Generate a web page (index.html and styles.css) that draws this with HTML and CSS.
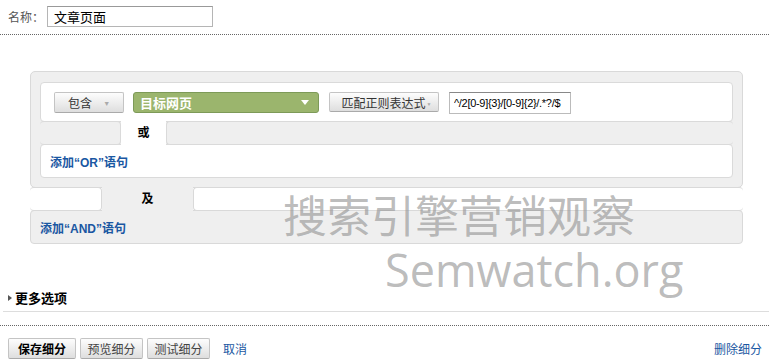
FILE: index.html
```html
<!DOCTYPE html>
<html lang="zh-CN">
<head>
    <meta charset="UTF-8">
    <title>细分</title>
    <link rel="stylesheet" href="styles.css">
</head>
<body>
    <div class="name-row">
        <label>名称：</label>
        <input type="text" class="name-input" value="文章页面">
    </div>
    <div class="dotted"></div>

    <div class="or-group">
        <div class="clause">
            <button class="btn-gray btn-include">包含 <span class="arrow-gray">&#9660;</span></button>
            <div class="select-green">
                <span>目标网页</span>
                <span class="arrow-white"></span>
            </div>
            <button class="btn-gray btn-match">匹配正则表达式<span class="arrow-gray small">&#9660;</span></button>
            <input type="text" class="regex-input" value="^/2[0-9]{3}/[0-9]{2}/.*?/$">
        </div>
        <div class="joint">
            <div class="joint-side left"></div>
            <div class="joint-tab">或</div>
            <div class="joint-side right"></div>
        </div>
        <div class="clause add-row">
            <a href="#" class="add-link">添加“OR”语句</a>
        </div>
    </div>

    <div class="joint and">
        <div class="joint-side left"></div>
        <div class="joint-tab">及</div>
        <div class="joint-side right"></div>
    </div>
    <div class="and-box">
        <a href="#" class="add-link">添加“AND”语句</a>
    </div>

    <div class="more">
        <span class="tri"></span>更多选项
    </div>
    <div class="dotted bottom"></div>

    <div class="actions">
        <button class="btn-gray btn-action strong">保存细分</button>
        <button class="btn-gray btn-action">预览细分</button>
        <button class="btn-gray btn-action">测试细分</button>
        <a href="#" class="link cancel">取消</a>
        <a href="#" class="link delete">删除细分</a>
    </div>

    <div class="watermark">
        <div class="wm-cn">搜索引擎营销观察</div>
        <div class="wm-en">Semwatch.org</div>
    </div>
</body>
</html>
```

FILE: styles.css
```css
body {
    margin: 0;
    font-family: "Liberation Sans", "Noto Sans CJK SC", sans-serif;
    font-size: 12px;
    color: #000;
    background: #fff;
    position: relative;
    height: 363px;
    overflow: hidden;
}
.name-row {
    display: flex;
    align-items: center;
    padding: 6px 0 0 8px;
    height: 21px;
}
.name-row label {
    color: #555;
    width: 39px;
}
.name-input {
    width: 166px;
    height: 21px;
    box-sizing: border-box;
    border: 1px solid #b5b5b5;
    border-top-color: #999;
    padding: 0 6px;
    font-family: inherit;
    font-size: 13px;
    color: #000;
}
.dotted {
    border-top: 1px dotted #666;
    margin-top: 7px;
}
.or-group {
    margin: 36px 26px 0 30px;
    background: #efefef;
    border: 1px solid #d9d9d9;
    border-radius: 5px;
    padding: 10px 9px 9px 9px;
}
.clause {
    display: flex;
    align-items: center;
    background: #fff;
    border: 1px solid #dadada;
    border-radius: 4px;
    height: 38px;
    padding-left: 13px;
}
.btn-gray {
    font-family: inherit;
    font-size: 12px;
    color: #333;
    background: linear-gradient(#fdfdfd, #dedede);
    border: 1px solid #c4c4c4;
    border-bottom-color: #aaa;
    border-radius: 2px;
    height: 21px;
    padding: 0;
    cursor: pointer;
}
.btn-include {
    width: 70px;
    text-align: left;
    padding-left: 13px;
}
.arrow-gray {
    color: #aaa;
    font-size: 7px;
    margin-left: 8px;
    vertical-align: 2px;
}
.arrow-gray.small {
    margin-left: 1px;
    font-size: 5px;
}
.select-green {
    display: flex;
    align-items: center;
    justify-content: space-between;
    box-sizing: border-box;
    width: 186px;
    height: 21px;
    margin-left: 9px;
    padding: 0 9px 0 6px;
    background: #9bb56d;
    border: 1px solid #7d9a58;
    border-radius: 3px;
    color: #fff;
    font-weight: bold;
    font-size: 13px;
}
.arrow-white {
    width: 0;
    height: 0;
    border-left: 4px solid transparent;
    border-right: 4px solid transparent;
    border-top: 5px solid #fff;
}
.btn-match {
    width: 110px;
    height: 20px;
    margin-left: 10px;
    padding-left: 5px;
}
.regex-input {
    width: 122px;
    height: 22px;
    box-sizing: border-box;
    margin: 1px 0 0 10px;
    border: 1px solid #bbb;
    border-top-color: #888;
    padding: 0 2px 0 4px;
    font-family: "Liberation Sans", sans-serif;
    font-size: 11px;
    letter-spacing: -0.3px;
    color: #000;
}
.joint {
    display: flex;
    height: 24px;
    margin: -1px 0;
}
.joint-side {
    background: #efefef;
    border: 1px solid #dadada;
    border-radius: 4px;
}
.joint-side.left {
    width: 80px;
    border-left: none;
}
.joint-side.right {
    flex: 1;
    border-right: none;
}
.joint-tab {
    width: 45px;
    background: #fff;
    font-weight: bold;
    text-align: center;
    line-height: 24px;
}
.add-row {
    height: 32px;
    padding-left: 9px;
}
.add-link {
    color: #1a57a2;
    font-weight: bold;
    text-decoration: none;
}
.joint.and {
    margin: -1px 26px -1px 30px;
}
.joint.and .joint-side {
    background: #fff;
    border-color: #d9d9d9;
}
.joint.and .joint-side.left {
    width: 71px;
}
.joint.and .joint-tab {
    width: 91px;
    background: #efefef;
}
.and-box {
    display: flex;
    align-items: center;
    height: 32px;
    margin: 0 26px 0 30px;
    padding-left: 9px;
    background: #efefef;
    border: 1px solid #d9d9d9;
    border-radius: 4px;
}
.more {
    display: flex;
    align-items: center;
    margin: 44px 0 0 3px;
    padding: 0 0 4px 5px;
    border-bottom: 1px solid #ddd;
    font-size: 13px;
    font-weight: bold;
}
.tri {
    width: 0;
    height: 0;
    border-top: 3px solid transparent;
    border-bottom: 3px solid transparent;
    border-left: 4px solid #555;
    margin-right: 3px;
}
.dotted.bottom {
    margin-top: 13px;
}
.actions {
    display: flex;
    align-items: center;
    padding: 12px 7px 0 8px;
    gap: 4px;
}
.btn-action {
    width: 63px;
    height: 21px;
    color: #444;
}
.btn-action.strong {
    width: 68px;
    font-weight: bold;
    color: #000;
}
.link {
    color: #1a57a2;
    text-decoration: none;
}
.cancel {
    margin-left: 9px;
}
.delete {
    margin-left: auto;
}
.watermark {
    position: absolute;
    left: 283px;
    top: 186px;
    color: rgba(150, 150, 150, 0.65);
    pointer-events: none;
}
.wm-cn {
    font-family: "Noto Sans CJK SC", sans-serif;
    font-size: 44px;
    line-height: 56px;
}
.wm-en {
    font-family: "Open Sans", sans-serif;
    font-size: 45px;
    line-height: 56px;
    margin-left: 102px;
}
```
